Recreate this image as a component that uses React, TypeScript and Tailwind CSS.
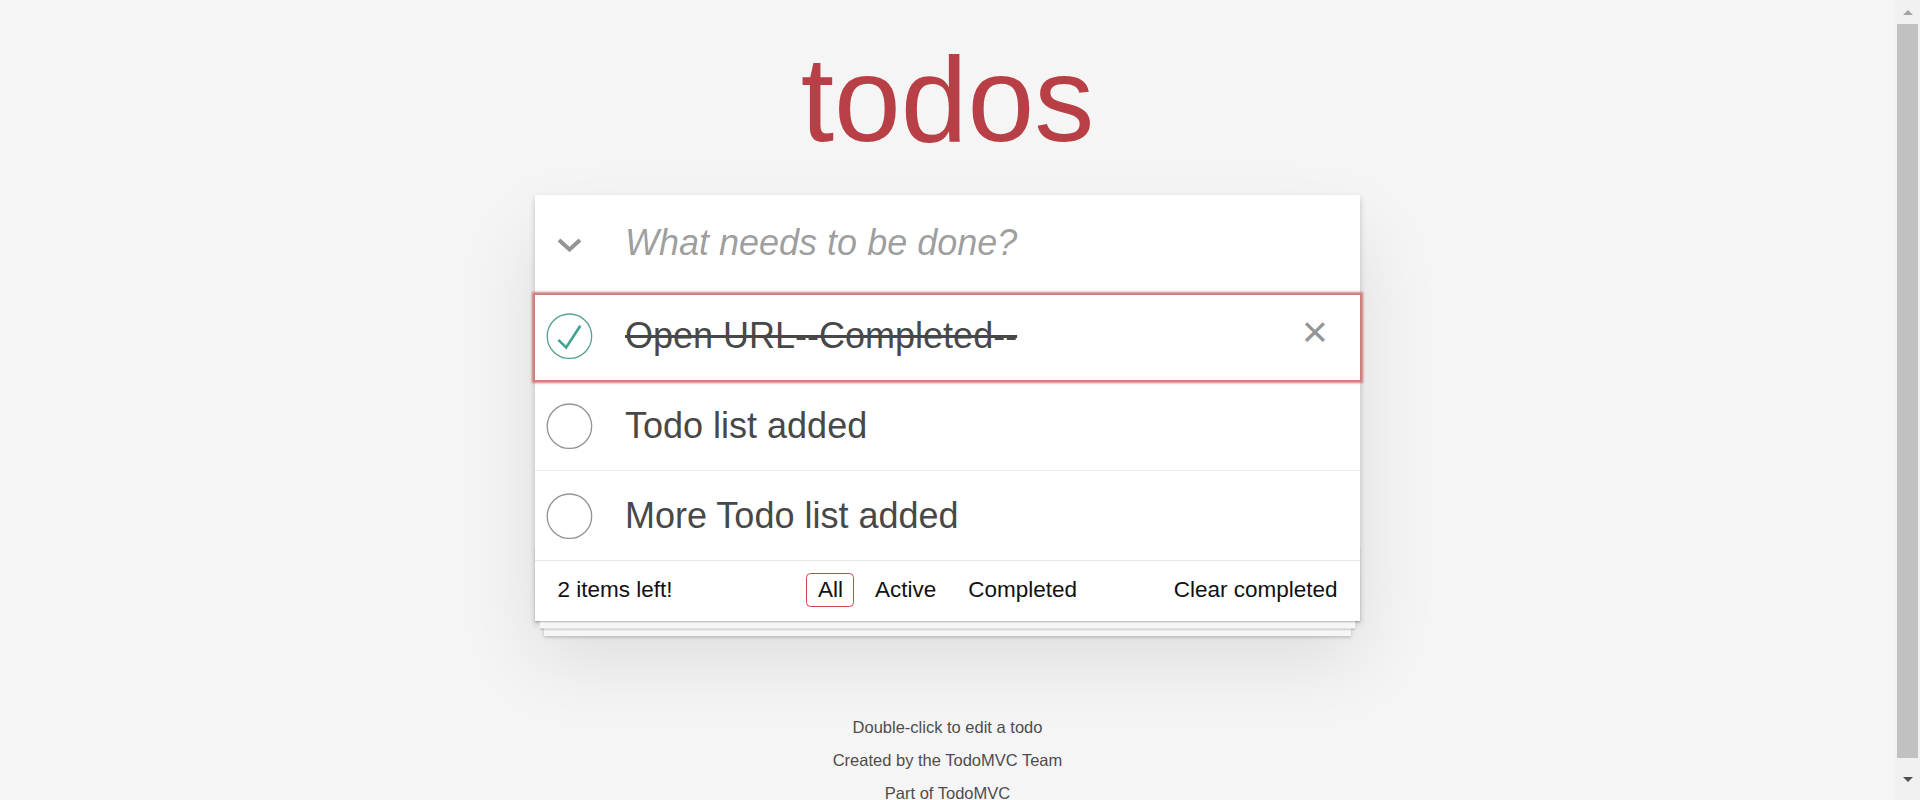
import React from 'react';

type Todo = { title: string; completed: boolean; focused?: boolean };

const todos: Todo[] = [
  { title: 'Open URL--Completed--', completed: true, focused: true },
  { title: 'Todo list added', completed: false },
  { title: 'More Todo list added', completed: false },
];

const filters = ['All', 'Active', 'Completed'];

// round toggle, same drawing as the TodoMVC background svgs
const Toggle = ({ checked }: { checked: boolean }) => (
  <svg width="60" height="60" viewBox="-10 -18 100 135" className="shrink-0">
    <circle
      cx="50"
      cy="50"
      r="50"
      fill="none"
      stroke={checked ? '#59A193' : '#949494'}
      strokeWidth="3"
    />
    {checked && (
      <path fill="#3EA390" d="M72 25L42 71 27 56l-4 4 20 20 34-52z" />
    )}
  </svg>
);

const TodoItem = ({ todo, last }: { todo: Todo; last: boolean }) => (
  <li
    className={`relative flex items-center ${
      last ? 'h-[89px]' : 'h-[90px] border-b border-[#ededed]'
    } ${todo.focused ? 'z-10' : ''}`}
  >
    {/* focus ring */}
    {todo.focused && (
      <span className="pointer-events-none absolute inset-x-0 top-[4px] bottom-0 shadow-[0_0_2px_3px_#cf7d7d]" />
    )}
    <Toggle checked={todo.completed} />
    <label
      className={`pl-[30px] text-[36px] leading-[1.2] text-[#484848] ${
        todo.completed ? 'line-through' : ''
      }`}
    >
      {todo.title}
    </label>
    {todo.focused && (
      <button className="absolute right-[15px] top-0 bottom-0 my-auto h-[60px] w-[60px] text-[45px] text-[#949494]">
        <span className="block h-full text-center leading-[52px]">×</span>
      </button>
    )}
  </li>
);

const Scrollbar = () => (
  <div className="flex w-[25px] shrink-0 flex-col items-center bg-[#f1f1f1]">
    <div className="flex h-[24px] items-center justify-center">
      <div className="h-0 w-0 border-x-[5px] border-b-[5px] border-x-transparent border-b-[#a3a3a3]" />
    </div>
    <div className="h-[734px] w-[21px] bg-[#c1c1c1]" />
    <div className="flex flex-1 items-center justify-center">
      <div className="h-0 w-0 border-x-[5px] border-t-[5px] border-x-transparent border-t-[#505050]" />
    </div>
  </div>
);

export default function App() {
  return (
    <div className="flex h-[800px] overflow-hidden bg-[#f5f5f5] font-['Liberation_Sans',Arial,sans-serif] text-[#111]">
      <main className="flex-1 pt-[39px]">
        <h1 className="h-[120px] text-center text-[120px] leading-[120px] font-normal text-[#b83f45]">
          todos
        </h1>

        <section className="relative mx-auto mt-[36px] w-[825px] bg-white shadow-[0_3px_6px_0_rgba(0,0,0,0.2),0_37.5px_75px_0_rgba(0,0,0,0.1)]">
          <header className="flex h-[96px] items-center">
            <div className="flex w-[90px] shrink-0 items-center pl-[22px] pt-[4px]">
              <svg width="25" height="14" viewBox="0 0 25 14">
                <polyline
                  points="2,2 12.5,11.5 23,2"
                  fill="none"
                  stroke="#949494"
                  strokeWidth="4"
                />
              </svg>
            </div>
            <input
              className="h-full flex-1 bg-transparent pr-[24px] text-[36px] text-[#484848] outline-none placeholder:italic placeholder:text-[rgba(0,0,0,0.4)]"
              placeholder="What needs to be done?"
            />
          </header>

          <ul>
            {todos.map((todo, i) => (
              <TodoItem key={i} todo={todo} last={i === todos.length - 1} />
            ))}
          </ul>

          <footer className="relative grid h-[61px] grid-cols-[1fr_auto_1fr] items-center border-t border-[#e6e6e6] px-[22.5px] pb-[2px] text-[22.5px]">
            <div className="pointer-events-none absolute inset-x-0 bottom-0 h-[75px] shadow-[0_1.5px_1.5px_rgba(0,0,0,0.2),0_12px_0_-4.5px_#f6f6f6,0_13.5px_1.5px_-4.5px_rgba(0,0,0,0.2),0_24px_0_-9px_#f6f6f6,0_25.5px_3px_-9px_rgba(0,0,0,0.2)]" />
            <span>2 items left!</span>
            <ul className="flex">
              {filters.map((f) => (
                <li key={f}>
                  <a
                    className={`mx-[4.5px] inline-block rounded-[4.5px] border px-[10.5px] py-[4px] leading-[24px] ${
                      f === 'All' ? 'border-[#ce4646]' : 'border-transparent'
                    }`}
                  >
                    {f}
                  </a>
                </li>
              ))}
            </ul>
            <button className="justify-self-end leading-[30px]">
              Clear completed
            </button>
          </footer>
        </section>

        <footer className="mt-[97.5px] flex flex-col gap-[16.5px] text-center text-[16.5px] leading-[16.5px] text-[#4d4d4d]">
          <p>Double-click to edit a todo</p>
          <p>Created by the TodoMVC Team</p>
          <p>Part of TodoMVC</p>
        </footer>
      </main>
      <Scrollbar />
    </div>
  );
}
